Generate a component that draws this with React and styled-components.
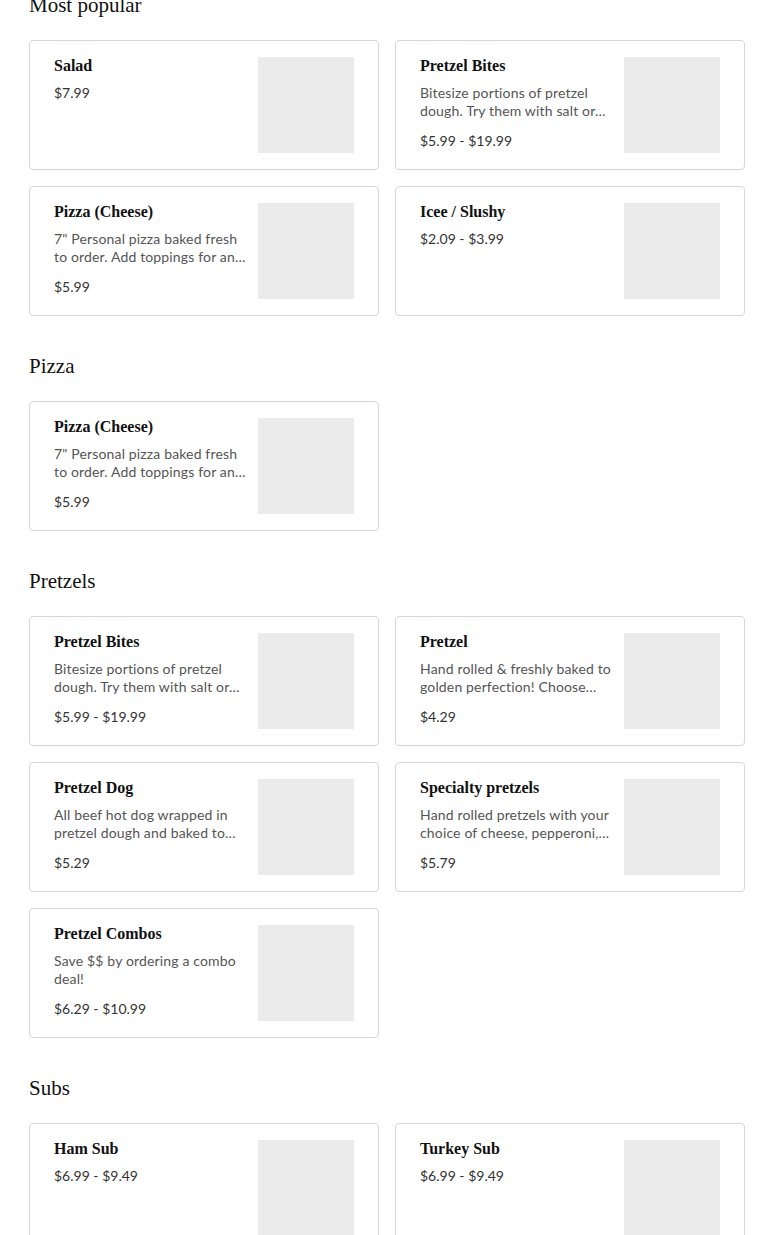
import React from 'react';
import styled, { createGlobalStyle } from 'styled-components';

const GlobalStyle = createGlobalStyle`
  body {
    margin: 0;
    background: #fff;
    font-family: Lato, "Noto Sans", sans-serif;
    color: #222;
  }
`;

const Page = styled.div`
  padding: 0 29px;
  margin-top: -9px;
`;

const Section = styled.section`
  margin-bottom: 36px;
`;

const SectionTitle = styled.h2`
  margin: 0 0 21px;
  font-family: "Liberation Serif", serif;
  font-weight: 400;
  font-size: 21px;
  line-height: 28px;
  color: #111;
`;

const Grid = styled.div`
  display: grid;
  grid-template-columns: 1fr 1fr;
  gap: 16px;
`;

const Card = styled.div`
  display: flex;
  justify-content: space-between;
  gap: 12px;
  height: 130px;
  box-sizing: border-box;
  padding: 16px 24px;
  border: 1px solid #d6d6d6;
  border-radius: 4px;
  background: #fff;
`;

const Info = styled.div`
  flex: 1;
  min-width: 0;
`;

const Name = styled.div`
  font-family: "Liberation Serif", serif;
  font-weight: 700;
  font-size: 16px;
  line-height: 18px;
  color: #111;
  margin-bottom: 9px;
`;

const Desc = styled.div`
  font-size: 14px;
  letter-spacing: 0.15px;
  line-height: 18px;
  color: #555;
  margin-bottom: 12px;
  display: -webkit-box;
  -webkit-line-clamp: 2;
  -webkit-box-orient: vertical;
  overflow: hidden;
`;

const Price = styled.div`
  font-size: 14px;
  line-height: 18px;
  color: #333;
`;

const Thumb = styled.div`
  flex: none;
  width: 96px;
  height: 96px;
  background: #ebebeb;
`;

const sections = [
  {
    title: 'Most popular',
    items: [
      { name: 'Salad', price: '$7.99' },
      {
        name: 'Pretzel Bites',
        desc: 'Bitesize portions of pretzel dough. Try them with salt or cinnamon sugar.',
        price: '$5.99 - $19.99',
      },
      {
        name: 'Pizza (Cheese)',
        desc: '7" Personal pizza baked fresh to order. Add toppings for an additional charge.',
        price: '$5.99',
      },
      { name: 'Icee / Slushy', price: '$2.09 - $3.99' },
    ],
  },
  {
    title: 'Pizza',
    items: [
      {
        name: 'Pizza (Cheese)',
        desc: '7" Personal pizza baked fresh to order. Add toppings for an additional charge.',
        price: '$5.99',
      },
    ],
  },
  {
    title: 'Pretzels',
    items: [
      {
        name: 'Pretzel Bites',
        desc: 'Bitesize portions of pretzel dough. Try them with salt or cinnamon sugar.',
        price: '$5.99 - $19.99',
      },
      {
        name: 'Pretzel',
        desc: 'Hand rolled & freshly baked to golden perfection! Choose your topping.',
        price: '$4.29',
      },
      {
        name: 'Pretzel Dog',
        desc: 'All beef hot dog wrapped in pretzel dough and baked to perfection.',
        price: '$5.29',
      },
      {
        name: 'Specialty pretzels',
        desc: 'Hand rolled pretzels with your choice of cheese, pepperoni, or jalapeño.',
        price: '$5.79',
      },
      {
        name: 'Pretzel Combos',
        desc: 'Save $$ by ordering a combo deal!',
        price: '$6.29 - $10.99',
      },
    ],
  },
  {
    title: 'Subs',
    items: [
      { name: 'Ham Sub', price: '$6.99 - $9.49' },
      { name: 'Turkey Sub', price: '$6.99 - $9.49' },
    ],
  },
];

const MenuItem = ({ item }) => (
  <Card>
    <Info>
      <Name>{item.name}</Name>
      {item.desc && <Desc>{item.desc}</Desc>}
      <Price>{item.price}</Price>
    </Info>
    <Thumb />
  </Card>
);

const App = () => (
  <>
    <GlobalStyle />
    <Page>
      {sections.map((s) => (
        <Section key={s.title}>
          <SectionTitle>{s.title}</SectionTitle>
          <Grid>
            {s.items.map((item, i) => (
              <MenuItem key={i} item={item} />
            ))}
          </Grid>
        </Section>
      ))}
    </Page>
  </>
);

export default App;
